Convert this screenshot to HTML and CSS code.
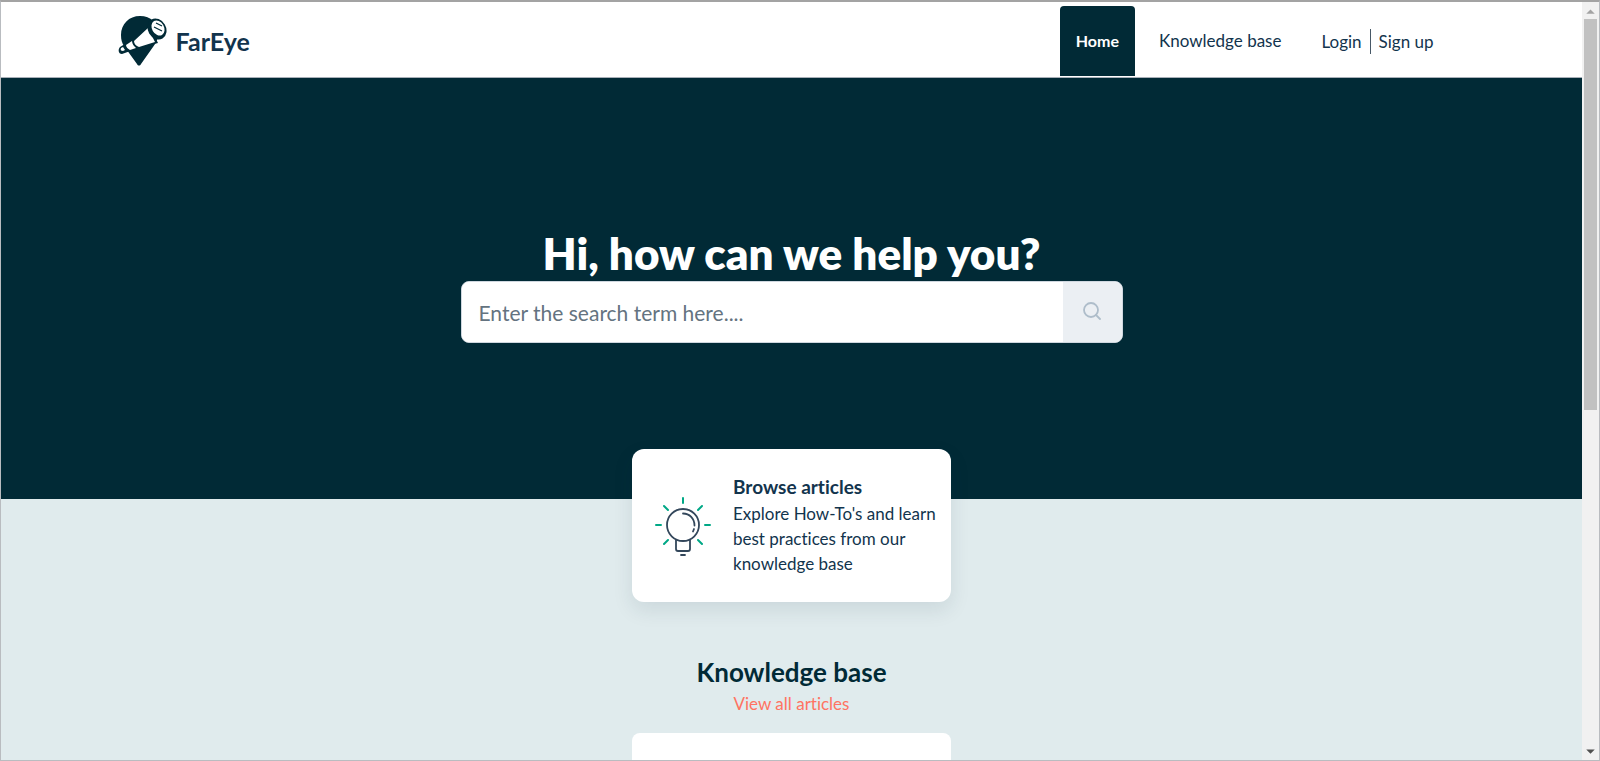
FILE: index.html
```html
<!DOCTYPE html>
<html lang="en">
<head>
    <meta charset="UTF-8">
    <meta name="viewport" content="width=device-width, initial-scale=1.0">
    <title>FarEye</title>
    <link rel="stylesheet" href="styles.css">
</head>
<body>
    <div class="page">
        <header class="header">
            <div class="header-inner">
                <a href="/" class="brand">
                    <svg class="brand-logo" viewBox="0 0 50 52" aria-hidden="true">
                        <path d="M22 1C11 1 3 9 3 20c0 5 1 8 3 11l13 18c1 2 3 2 4 0L35 32c3-4 5-8 5-13C40 8 33 1 22 1z" fill="#012a36"/>
                        <path d="M2 32l13-8L31 10l9 18-22 6-14 5c-4 0-4-5-2-7z" fill="#012a36"/>
                        <path d="M16 26L30 13l7 14-16 5c-3-1-5-3-5-6zM8 30l6-4c0 3 2 5 4 7l-6 2c-2-1-4-3-4-5z" fill="#fff"/>
                        <path d="M3 33l2-1 2 3-2 1c-2 0-3-1-2-3z" fill="#fff"/>
                        <ellipse cx="39" cy="14" rx="9" ry="11" transform="rotate(-30 39 14)" fill="#012a36"/>
                        <ellipse cx="40" cy="13" rx="6" ry="8" transform="rotate(-30 40 13)" fill="#fff"/>
                        <path d="M38 8l6 3M36 12l8 4" stroke="#012a36" stroke-width="1.200"/>
                    </svg>
                    <span>FarEye</span>
                </a>
                <nav class="nav">
                    <a href="/" class="nav-link active">Home</a>
                    <a href="#kb" class="nav-link">Knowledge base</a>
                    <div class="account">
                        <a href="#login">Login</a>
                        <a href="#signup">Sign up</a>
                    </div>
                </nav>
            </div>
        </header>

        <main>
            <section class="hero">
                <h1>Hi, how can we help you?</h1>
                <form class="search">
                    <input type="text" name="term" placeholder="Enter the search term here...." aria-label="Search">
                    <button type="submit" aria-label="Search">
                        <svg width="18" height="18" viewBox="0 0 18 18" fill="none" stroke="#aebdca" stroke-width="1.800" stroke-linecap="round">
                            <circle cx="8" cy="8" r="7"/>
                            <path d="M13 13l4 4"/>
                        </svg>
                    </button>
                </form>
            </section>

            <a href="#kb" class="card">
                <svg class="card-icon" viewBox="0 0 56 60" fill="none" stroke="#33475b" stroke-width="1.800" stroke-linecap="round" aria-hidden="true">
                    <circle cx="28" cy="29" r="16"/>
                    <path d="M28 17.500c6.500 0 11.500 5 11.500 12M39 33l-1 2.500"/>
                    <path d="M21 44v9q0 2 2 2h10q2 0 2-2v-9M26 59h4"/>
                    <path d="M28 2v5M1 29h5M50 29h5M9 10l4 4M47 10l-4 4M9 48l4-4M47 48l-4-4" stroke="#00a886" stroke-width="2"/>
                </svg>
                <div class="card-text">
                    <h2>Browse articles</h2>
                    <p>Explore How-To's and learn best practices from our knowledge base</p>
                </div>
            </a>

            <section class="kb" id="kb">
                <h2>Knowledge base</h2>
                <a href="#all">View all articles</a>
                <div class="kb-card"></div>
            </section>
        </main>
    </div>

    <div class="scrollbar" aria-hidden="true">
        <svg class="arrow" viewBox="0 0 16 16"><path d="M4 11h8L8 7z" fill="#a3a3a3"/></svg>
        <div class="track"><div class="thumb"></div></div>
        <svg class="arrow" viewBox="0 0 16 16"><path d="M4 6h8l-4 4z" fill="#505050"/></svg>
    </div>
</body>
</html>
```
FILE: styles.css
```css
* {
    box-sizing: border-box;
}

body {
    display: flex;
    height: 100vh;
    margin: 0;
    overflow: hidden;
    border: 1px solid #b9bcc0;
    border-top: 2px solid #a3a3a3;
    background-color: #e0ebed;
    color: #12344d;
    font-family: Lato, "Open Sans", sans-serif;
    font-size: 17px;
    font-variant-ligatures: none;
}

h1, h2, p {
    margin: 0;
}

a {
    color: inherit;
    text-decoration: none;
}

.page {
    flex: 1;
    min-width: 0;
    overflow: hidden;
}

/* Header */
.header {
    background-color: #fff;
    border-bottom: 1px solid #a9b0b8;
}

.header-inner {
    display: flex;
    justify-content: space-between;
    align-items: center;
    max-width: 1348px;
    margin: 0 auto;
    padding: 4px 32px 1px 0;
}

.brand {
    display: flex;
    align-items: center;
    gap: 8px;
    font-size: 25px;
    font-weight: 700;
}

.brand-logo {
    width: 50px;
    height: 52px;
}

.nav {
    display: flex;
    align-items: center;
    gap: 8px;
}

.nav-link {
    padding: 0 16px;
    line-height: 70px;
}

.nav-link.active {
    background-color: #012a36;
    border-radius: 4px 4px 0 0;
    color: #fff;
    font-size: 16px;
    font-weight: 700;
}

.account {
    display: flex;
    margin-left: 16px;
    line-height: 25px;
}

.account a + a {
    margin-left: 8px;
    padding-left: 8px;
    border-left: 1px solid #475867;
}

/* Search banner */
.hero {
    display: flex;
    flex-direction: column;
    align-items: center;
    padding: 147px 16px 156px;
    background-color: #012a36;
}

.hero h1 {
    color: #fff;
    font-size: 44px;
    font-weight: 800;
    line-height: 56px;
}

.search {
    display: flex;
    width: 100%;
    max-width: 662px;
    height: 62px;
    overflow: hidden;
    border: 1px solid #cfd7df;
    border-radius: 8px;
    background-color: #fff;
}

.search input {
    flex: 1;
    min-width: 0;
    padding: 0 17px;
    border: none;
    outline: none;
    font-family: inherit;
    font-size: 21px;
}

.search input::placeholder {
    color: #647380;
}

.search button {
    width: 59px;
    border: none;
    background-color: #ebeff3;
    cursor: pointer;
}

/* Browse card, overlaps the banner */
.card {
    display: flex;
    align-items: center;
    gap: 22px;
    position: relative;
    width: 319px;
    margin: -50px auto 0;
    padding: 24px 12px 24px 23px;
    border-radius: 12px;
    background-color: #fff;
    box-shadow: 0 8px 20px rgba(24, 50, 71, 0.1);
}

.card-icon {
    flex: none;
    width: 56px;
    height: 60px;
}

.card-text h2 {
    font-size: 19px;
    line-height: 28px;
}

.card-text p {
    padding-bottom: 2px;
    line-height: 25px;
}

/* Knowledge base */
.kb {
    display: flex;
    flex-direction: column;
    align-items: center;
    padding-top: 52px;
}

.kb h2 {
    color: #012a36;
    font-size: 26px;
    line-height: 37px;
}

.kb a {
    color: #ff7362;
    line-height: 26px;
}

.kb-card {
    width: 319px;
    height: 150px;
    margin-top: 16px;
    border-radius: 8px;
    background-color: #fff;
}

/* Scrollbar */
.scrollbar {
    display: flex;
    flex-direction: column;
    width: 17px;
    background-color: #f1f1f1;
}

.arrow {
    width: 17px;
    height: 17px;
}

.track {
    flex: 1;
    padding: 0 2px;
}

.thumb {
    height: 54%;
    background-color: #c1c1c1;
}
```
